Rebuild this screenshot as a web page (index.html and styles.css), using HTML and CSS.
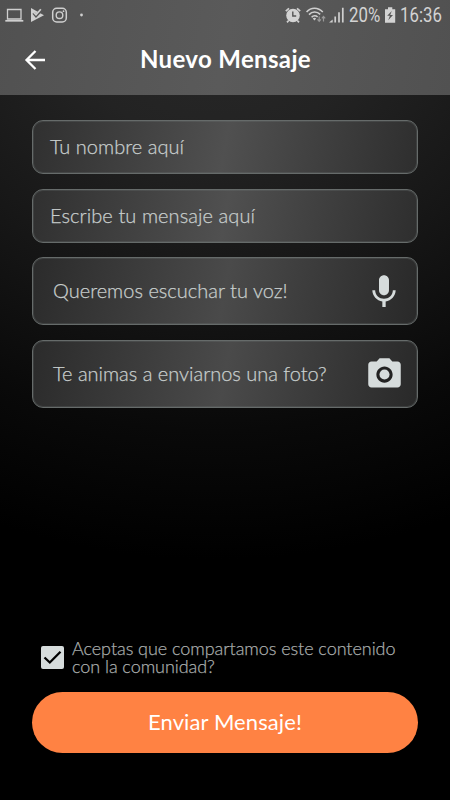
FILE: index.html
```html
<!DOCTYPE html>
<html lang="es">
<head>
<meta charset="utf-8">
<title>Nuevo Mensaje</title>
<link rel="stylesheet" href="styles.css">
</head>
<body>
<div class="screen">
  <header class="top">
    <div class="status">
      <svg class="left-icons" width="90" height="30" viewBox="0 0 90 30" fill="none" stroke="#cfcfcf">
        <path d="M7.5 9.5H21V19H7.5Z" stroke-width="1.3"/>
        <path d="M5.3 20.8H23.3" stroke-width="1.7"/>
        <path d="M31 8L44 15.3L31 22Z" fill="#cfcfcf" stroke="none"/>
        <path d="M33.5 12.8L36 15.8L42.5 9" stroke="#555" stroke-width="2.8"/>
        <path d="M33.5 12.2L36 14.8L40.8 9.3" stroke-width="1.7"/>
        <rect x="52.7" y="8.3" width="13.6" height="13.6" rx="4" stroke-width="1.5"/>
        <circle cx="59.5" cy="15.2" r="3.3" stroke-width="1.4"/>
        <circle cx="63.5" cy="11.2" r=".9" fill="#cfcfcf" stroke="none"/>
        <circle cx="81.5" cy="15" r="1.4" fill="#cfcfcf" stroke="none"/>
      </svg>
      <div class="status-right">
        <svg width="62" height="30" viewBox="284 0 62 30" fill="none" stroke="#cfcfcf">
          <circle cx="293" cy="15.5" r="6.8" fill="#d3d3d3" stroke="none"/>
          <path d="M285.8 11.2L289 8.3M297 8.3L300.2 11.2M288.7 20.5L287 22.3M297.3 20.5L299 22.3" stroke-width="1.8"/>
          <path d="M292.8 11.5V16H296.2" stroke="#555" stroke-width="1.4"/>
          <path d="M306.6 12C311 7 318 7 322.8 12M309 14.6C312.2 11.2 317 11.2 320.2 14.4M311.6 17.2C313.3 15.5 316 15.5 317.6 17" stroke-width="1.6"/>
          <path d="M312.7 18.4Q314.5 17.2 316.2 18.4L314.5 20.4Z" fill="#cfcfcf" stroke="none"/>
          <path d="M319.2 16.4V21M317.5 19.4L319.2 21.3L320.9 19.4M323.5 21.5V16.7M321.8 18.3L323.5 16.4L325.2 18.3" stroke="#999" stroke-width="1.2"/>
          <path d="M329 22.5L332.7 19.6V22.5Z" fill="#cfcfcf" stroke="none"/>
          <path d="M335.2 16.6V22.5M339 12.2V22.5M342.8 7.8V22.5" stroke-width="1.7"/>
        </svg>
        <span class="percent">20%</span>
        <svg width="12" height="30" viewBox="384 0 12 30">
          <path d="M385 9.3H388V7.3H392.3V9.3H395.2V22.7H385Z" fill="#d3d3d3"/>
          <path d="M391.8 11L387.2 15.8H389.9L388.2 20.2L393 14.9H390.2Z" fill="#555"/>
        </svg>
        <span class="clock">16:36</span>
      </div>
    </div>
    <div class="bar">
      <svg class="back" width="22" height="22" viewBox="24 49 22 22" fill="none" stroke="#fff" stroke-width="2.3"><path d="M45 60H27M35.5 51L26.5 60L35.5 69"/></svg>
      <h1>Nuevo Mensaje</h1>
    </div>
  </header>
  <main class="form">
    <div class="field"><span class="t1">Tu nombre aquí</span></div>
    <div class="field"><span class="t2">Escribe tu mensaje aquí</span></div>
    <div class="field tall voice"><span class="t3">Queremos escuchar tu voz!</span>
      <svg class="mic" width="40" height="40" viewBox="0 0 24 24" fill="#d6dcdc"><path d="M12 14c1.660 0 2.990-1.340 2.990-3L15 5c0-1.660-1.340-3-3-3S9 3.340 9 5v6c0 1.660 1.340 3 3 3zm5.300-3c0 3-2.540 5.100-5.300 5.100S6.700 14 6.700 11H5c0 3.410 2.720 6.230 6 6.720V21h2v-3.280c3.280-.480 6-3.300 6-6.720h-1.700z"/></svg>
    </div>
    <div class="field tall"><span class="t4">Te animas a enviarnos una foto?</span>
      <svg class="camera" width="39" height="39" viewBox="0 0 24 24"><circle cx="12" cy="12" r="6" fill="#222"/><circle cx="12" cy="12" r="3.1" fill="#d6dcdc"/><path fill="#d6dcdc" d="M9 2L7.170 4H4c-1.100 0-2 .9-2 2v12c0 1.100.9 2 2 2h16c1.100 0 2-.9 2-2V6c0-1.100-.9-2-2-2h-3.170L15 2H9zm3 15c-2.760 0-5-2.240-5-5s2.240-5 5-5 5 2.240 5 5-2.240 5-5 5z"/></svg>
    </div>
  </main>
  <footer class="bottom">
    <div class="consent">
      <svg width="23" height="23" viewBox="0 0 23 23"><rect width="23" height="23" rx="2" fill="#d6dcdc"/><path d="M3.500 11.500L8.800 16.500L19.500 5.800" fill="none" stroke="#000" stroke-width="2.300"/></svg>
      <p>Aceptas que compartamos este contenido<br>con la comunidad?</p>
    </div>
    <button class="send">Enviar Mensaje!</button>
  </footer>
</div>
</body>
</html>
```
FILE: styles.css
```css
* { box-sizing: border-box; }
body { margin: 0; background: #000; font-family: Lato, sans-serif; }
.screen {
  width: 450px; height: 800px; display: flex; flex-direction: column;
  background: radial-gradient(ellipse 620px 560px at 215px 0, #292929 0%, #232323 25%, #171717 50%, #090909 77%, #000 100%);
}
.top { height: 95px; background: linear-gradient(100deg, #515151, #5a5a5a 50%, #515151); }
.status { height: 30px; display: flex; justify-content: space-between; padding-right: 8px; }
.status-right { display: flex; color: #d3d3d3; font: 20px/31px Roboto, sans-serif; }
.percent, .clock { display: block; transform-origin: left center; white-space: nowrap; }
.percent { width: 31px; margin: 0 4px 0 3px; transform: scaleX(.84); }
.clock { width: 42px; margin-left: 4px; transform: scaleX(.84); }
.bar { height: 60px; display: grid; grid-template-columns: 70px 311px 69px; align-items: center; }
.back { margin-left: 24px; }
h1 { margin: -2px 0 0; text-align: center; font-size: 24px; line-height: 30px; font-weight: 700; letter-spacing: .35px; color: #fff; white-space: nowrap; }
.form { display: flex; flex-direction: column; gap: 15px; padding: 25px 32px 0; }
.field {
  height: 54px; border: 1px solid #666b6a; border-radius: 11px; padding: 0 13px 2px 17px;
  box-shadow: inset 0 0 0 1px rgba(120, 128, 126, .22);
  display: flex; align-items: center; justify-content: space-between;
  font-size: 20px; font-weight: 300; color: #c8cecd; white-space: nowrap;
  -webkit-text-stroke: .25px #c8cecd;
  background: linear-gradient(100deg, #303030, #505050 50%, #2e2e2e);
}
.field.tall { height: 68px; padding: 0 13px 3px 20px; background: linear-gradient(100deg, #2b2b2b, #4a4a4a 50%, #292929); }
.field.voice { margin-top: -1px; }
.mic, .camera { margin-top: 4px; }
.t1 { letter-spacing: .05px; }
.t2 { letter-spacing: .08px; }
.t3 { letter-spacing: .02px; }
.t4 { letter-spacing: -.01px; }
.bottom { margin-top: auto; padding: 0 32px 47px; }
.consent { display: flex; gap: 8px; padding: 0 0 17px 9px; }
.consent svg { margin-top: 6px; }
.consent p { margin: -1px 0 0; font-size: 18px; font-weight: 300; letter-spacing: -.05px; line-height: 18px; color: #a9adac; -webkit-text-stroke: .25px #a9adac; white-space: nowrap; }
.send { display: block; width: 386px; height: 61px; padding: 0 0 2px; border: 0; border-radius: 31px; background: #ff8243; color: #fff; font: 22px Lato, sans-serif; letter-spacing: .1px; }
```
